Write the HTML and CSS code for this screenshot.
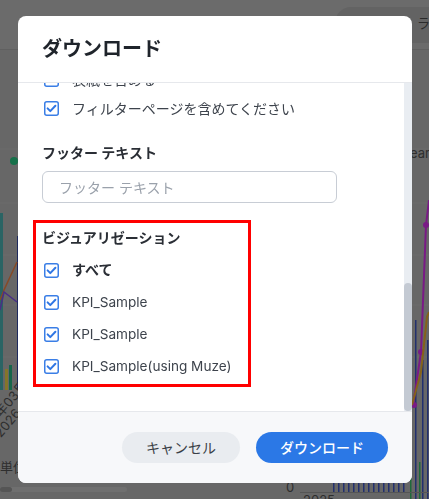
FILE: index.html
```html
<!DOCTYPE html>
<html lang="ja">
<head>
<meta charset="utf-8">
<title>ダウンロード</title>
<link rel="stylesheet" href="styles.css">
</head>
<body>
<div class="dashboard">
  <div class="topbar">
    <div class="topbar-pill">ラベル</div>
  </div>
  <svg class="canvas" width="429" height="449" viewBox="0 50 429 449" xmlns="http://www.w3.org/2000/svg">
    <g stroke="#6d6d6d" stroke-width="1">
      <line x1="0" y1="149" x2="429" y2="149"/>
      <line x1="0" y1="203" x2="429" y2="203"/>
      <line x1="0" y1="255" x2="429" y2="255"/>
      <line x1="0" y1="305" x2="429" y2="305"/>
      <line x1="0" y1="357" x2="429" y2="357"/>
    </g>
    <circle cx="14" cy="161" r="4" fill="#16704a"/>
    <rect x="0" y="213" width="3" height="177" fill="#2a6464"/>
    <rect x="17" y="236" width="1.5" height="154" fill="#1e2a5e"/>
    <rect x="5" y="369" width="3" height="21" fill="#85752a"/>
    <rect x="9" y="365" width="3" height="25" fill="#16664a"/>
    <polyline points="0,300 4,290 17,262" fill="none" stroke="#874a26" stroke-width="1.5"/>
    <polyline points="0,310 4,292 17,302" fill="none" stroke="#4a2e86" stroke-width="1.5"/>
    <text x="-2" y="412" class="bg-text" transform="rotate(-50 6 412)">年03月</text>
    <text x="-2" y="432" class="bg-text" transform="rotate(-50 6 432)">2026</text>
    <text x="0" y="472" class="bg-text">単位</text>
    <rect x="0" y="487" width="127" height="5" rx="2.5" fill="#6f6f6f"/>
    <rect x="0" y="487" width="12" height="5" rx="2.5" fill="#555"/>
    <text x="410" y="158" class="bg-text">ear-</text>
    <rect x="415" y="320" width="1.5" height="179" fill="#22306e"/>
    <rect x="422" y="360" width="1.5" height="139" fill="#22306e"/>
    <rect x="427" y="340" width="1.5" height="159" fill="#22306e"/>
    <rect x="410" y="470" width="1.5" height="29" fill="#1e6a3a"/>
    <rect x="419" y="462" width="1.5" height="37" fill="#1e6a3a"/>
    <polyline points="413,406 421,352 426,225 429,200" fill="none" stroke="#7a1a86" stroke-width="2"/>
    <circle cx="426" cy="225" r="3" fill="#7a1a86"/>
    <circle cx="421" cy="352" r="3" fill="#7a1a86"/>
    <circle cx="414" cy="405" r="3" fill="#7a1a86"/>
    <polyline points="412,405 421,372 427,317 429,312" fill="none" stroke="#85621a" stroke-width="2"/>
    <text x="286" y="492" class="bg-text">0</text>
    <line x1="300" y1="492.5" x2="429" y2="492.5" stroke="#555" stroke-width="1"/>
    <g fill="#22306e">
      <rect x="333" y="478" width="1.5" height="14"/>
      <rect x="338" y="476" width="1.5" height="16"/>
      <rect x="343" y="479" width="1.5" height="13"/>
      <rect x="348" y="477" width="1.5" height="15"/>
      <rect x="353" y="478" width="1.5" height="14"/>
      <rect x="358" y="476" width="1.5" height="16"/>
      <rect x="363" y="479" width="1.5" height="13"/>
      <rect x="368" y="477" width="1.5" height="15"/>
      <rect x="373" y="478" width="1.5" height="14"/>
      <rect x="378" y="476" width="1.5" height="16"/>
      <rect x="383" y="479" width="1.5" height="13"/>
      <rect x="388" y="477" width="1.5" height="15"/>
      <rect x="393" y="478" width="1.5" height="14"/>
      <rect x="398" y="476" width="1.5" height="16"/>
      <rect x="403" y="479" width="1.5" height="13"/>
    </g>
    <text x="303" y="505" class="bg-text">2025</text>
  </svg>
</div>

<div class="overlay">
  <div class="modal">
    <div class="modal-header">
      <h2 class="modal-title">ダウンロード</h2>
    </div>
    <div class="modal-body">
      <div class="scroll-area">
        <div class="body-inner">
          <div class="section">
            <div class="section-label">ファイル名</div>
            <div class="text-input"><span class="placeholder">ダッシュボード</span></div>
          </div>
          <div class="section">
            <div class="section-label">ファイル形式</div>
            <div class="option-row"><span class="radio"></span><span>PDF</span></div>
            <div class="option-row"><span class="radio"></span><span>PNG</span></div>
          </div>
          <div class="section">
            <div class="section-label">ページサイズ</div>
            <div class="text-input"><span>A4</span></div>
          </div>
          <div class="section">
            <div class="section-label">向き</div>
            <div class="option-row"><span class="radio"></span><span>縦</span></div>
            <div class="option-row"><span class="radio"></span><span>横</span></div>
          </div>
          <div class="section">
            <div class="section-label">ページ番号</div>
            <div class="option-row">
              <svg class="cb" width="15" height="15" viewBox="0 0 15 15"><rect x="0.75" y="0.75" width="13.5" height="13.5" rx="2" fill="#fff" stroke="#3a7ee6" stroke-width="1.5"/><path d="M3.6 7.4 L6.3 10.1 L11.4 4.8" fill="none" stroke="#2f76e4" stroke-width="2" stroke-linecap="round" stroke-linejoin="round"/></svg>
              <span>ページ番号を表示</span>
            </div>
          </div>

          <div class="section">
            <div class="section-label">オプション</div>
            <div class="option-row">
              <svg class="cb" width="15" height="15" viewBox="0 0 15 15"><rect x="0.75" y="0.75" width="13.5" height="13.5" rx="2" fill="#fff" stroke="#3a7ee6" stroke-width="1.5"/></svg>
              <span>表紙を含める</span>
            </div>
            <div class="option-row">
              <svg class="cb" width="15" height="15" viewBox="0 0 15 15"><rect x="0.75" y="0.75" width="13.5" height="13.5" rx="2" fill="#fff" stroke="#3a7ee6" stroke-width="1.5"/><path d="M3.6 7.4 L6.3 10.1 L11.4 4.8" fill="none" stroke="#2f76e4" stroke-width="2" stroke-linecap="round" stroke-linejoin="round"/></svg>
              <span>フィルターページを含めてください</span>
            </div>
          </div>

          <div class="section">
            <div class="section-label">フッター テキスト</div>
            <div class="text-input wide"><span class="placeholder">フッター テキスト</span></div>
          </div>

          <div class="section viz">
            <div class="section-label">ビジュアリゼーション</div>
            <div class="viz-row">
              <svg class="cb" width="15" height="15" viewBox="0 0 15 15"><rect x="0.75" y="0.75" width="13.5" height="13.5" rx="2" fill="#fff" stroke="#3a7ee6" stroke-width="1.5"/><path d="M3.6 7.4 L6.3 10.1 L11.4 4.8" fill="none" stroke="#2f76e4" stroke-width="2" stroke-linecap="round" stroke-linejoin="round"/></svg>
              <span class="strong">すべて</span>
            </div>
            <div class="viz-row">
              <svg class="cb" width="15" height="15" viewBox="0 0 15 15"><rect x="0.75" y="0.75" width="13.5" height="13.5" rx="2" fill="#fff" stroke="#3a7ee6" stroke-width="1.5"/><path d="M3.6 7.4 L6.3 10.1 L11.4 4.8" fill="none" stroke="#2f76e4" stroke-width="2" stroke-linecap="round" stroke-linejoin="round"/></svg>
              <span class="latin">KPI_Sample</span>
            </div>
            <div class="viz-row">
              <svg class="cb" width="15" height="15" viewBox="0 0 15 15"><rect x="0.75" y="0.75" width="13.5" height="13.5" rx="2" fill="#fff" stroke="#3a7ee6" stroke-width="1.5"/><path d="M3.6 7.4 L6.3 10.1 L11.4 4.8" fill="none" stroke="#2f76e4" stroke-width="2" stroke-linecap="round" stroke-linejoin="round"/></svg>
              <span class="latin">KPI_Sample</span>
            </div>
            <div class="viz-row">
              <svg class="cb" width="15" height="15" viewBox="0 0 15 15"><rect x="0.75" y="0.75" width="13.5" height="13.5" rx="2" fill="#fff" stroke="#3a7ee6" stroke-width="1.5"/><path d="M3.6 7.4 L6.3 10.1 L11.4 4.8" fill="none" stroke="#2f76e4" stroke-width="2" stroke-linecap="round" stroke-linejoin="round"/></svg>
              <span class="latin">KPI_Sample(using Muze)</span>
            </div>
          </div>
        </div>
      </div>
      <div class="scroll-track"><div class="scroll-thumb"></div></div>
    </div>
    <div class="modal-footer">
      <button class="btn btn-secondary">キャンセル</button>
      <button class="btn btn-primary">ダウンロード</button>
    </div>
  </div>
</div>
</body>
</html>
```

FILE: styles.css
```css
* { box-sizing: border-box; }

html, body {
  margin: 0;
  padding: 0;
  width: 429px;
  height: 499px;
  overflow: hidden;
}

body {
  background: #676767;
  font-family: Inter, "Noto Sans CJK JP", sans-serif;
  color: #3b414b;
}

.dashboard {
  display: flex;
  flex-direction: column;
}

.topbar {
  height: 50px;
  background: #6b6b6b;
  border-bottom: 1px solid #606060;
  display: flex;
  justify-content: flex-end;
  padding-top: 7px;
}

.topbar-pill {
  width: 94px;
  height: 36px;
  border-radius: 16px 0 0 16px;
  background: #636363;
  color: #2b2b2b;
  font-size: 13px;
  line-height: 32px;
  padding-left: 82px;
  white-space: nowrap;
  overflow: hidden;
}

.canvas {
  display: block;
}

.bg-text {
  font-family: Inter, "Noto Sans CJK JP", sans-serif;
  font-size: 13px;
  fill: #2e2e2e;
}

.overlay {
  position: fixed;
  inset: 0;
  padding: 16px 0 0 18px;
}

.modal {
  width: 394px;
  height: 467px;
  background: #fff;
  border-radius: 8px;
  overflow: hidden;
  display: flex;
  flex-direction: column;
}

.modal-header {
  height: 67px;
  flex-shrink: 0;
  border-bottom: 1px solid #e6e8ec;
  display: flex;
  align-items: center;
  padding: 0 24px;
}

.modal-title {
  margin: 0;
  font-size: 20px;
  line-height: 28px;
  font-weight: 700;
  color: #1f242b;
}

.modal-body {
  flex: 1;
  min-height: 0;
  display: flex;
}

.scroll-area {
  flex: 1;
  min-width: 0;
  overflow-y: auto;
  display: flex;
  flex-direction: column-reverse;
  scrollbar-width: none;
}

.scroll-area::-webkit-scrollbar {
  display: none;
}

.scroll-track {
  width: 8px;
  flex-shrink: 0;
  background: #e9edf2;
  display: flex;
  flex-direction: column;
  justify-content: flex-end;
}

.scroll-thumb {
  height: 128px;
  border-radius: 4px;
  background: #c4cad3;
}

.body-inner {
  flex-shrink: 0;
  padding: 17px 24px 24px 24px;
  display: flex;
  flex-direction: column;
  gap: 20px;
}

.section {
  display: flex;
  flex-direction: column;
}

.section-label {
  font-size: 14px;
  line-height: 20px;
  font-weight: 700;
  color: #2a2e35;
  margin-bottom: 8px;
  white-space: nowrap;
}

.option-row {
  display: flex;
  align-items: center;
  height: 29px;
  gap: 13px;
  font-size: 14px;
  line-height: 20px;
  color: #3d434c;
  white-space: nowrap;
}

.viz-row {
  display: flex;
  align-items: center;
  height: 32px;
  gap: 13px;
  font-size: 14px;
  line-height: 20px;
  color: #3d434c;
  white-space: nowrap;
}

.latin {
  font-size: 13.6px;
}

.cb {
  flex-shrink: 0;
  margin-left: 2px;
  display: block;
}

.radio {
  width: 15px;
  height: 15px;
  margin-left: 2px;
  border: 1.5px solid #3a7ee6;
  border-radius: 50%;
  flex-shrink: 0;
}

.strong {
  font-weight: 700;
  color: #2a2e35;
}

.text-input {
  height: 32px;
  width: 295px;
  border: 1px solid #c8cdd5;
  border-radius: 6px;
  padding: 0 16px;
  display: flex;
  align-items: center;
  font-size: 14px;
  color: #3d434c;
}

.placeholder {
  color: #9aa1ab;
}

.viz {
  margin-top: -3px;
  margin-left: -9px;
  width: 218px;
  border: 3px solid #ff0000;
  padding: 5px 6px 2px 6px;
}

.viz .section-label {
  margin-bottom: 6px;
}

.modal-footer {
  height: 72px;
  flex-shrink: 0;
  border-top: 1px solid #e6e8ec;
  background: #f7f8fa;
  display: flex;
  justify-content: flex-end;
  align-items: center;
  gap: 16px;
  padding: 0 24px;
}

.btn {
  height: 31px;
  border: none;
  border-radius: 16px;
  padding: 0 24px;
  font-family: Inter, "Noto Sans CJK JP", sans-serif;
  font-size: 14px;
  line-height: 20px;
  cursor: pointer;
}

.btn-secondary {
  width: 118px;
  background: #e9ecf0;
  color: #3a3f47;
}

.btn-primary {
  width: 132px;
  background: #2b78e6;
  color: #fff;
  font-weight: 500;
}
```
